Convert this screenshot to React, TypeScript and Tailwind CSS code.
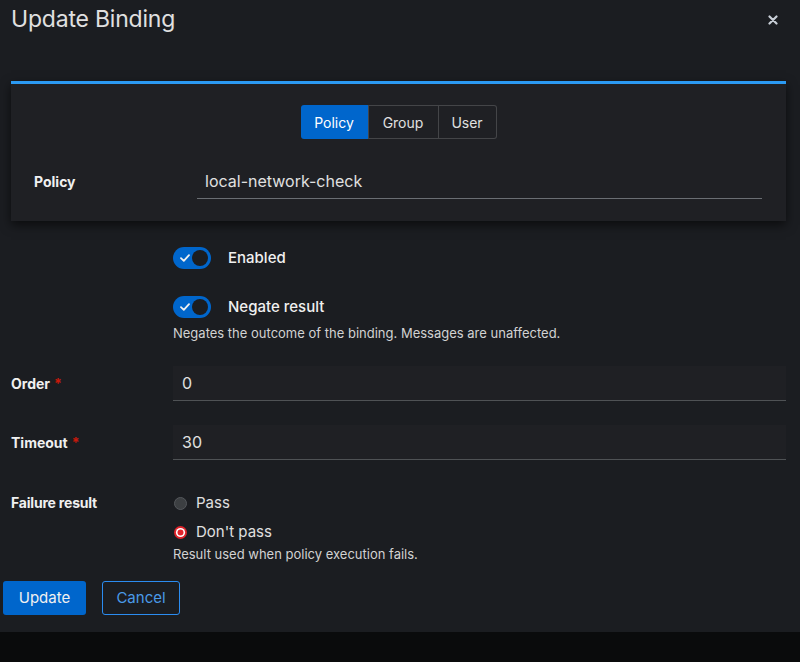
import React from "react";

function Toggle() {
  return (
    <div className="relative w-[38px] h-[22px] rounded-full bg-[#0066cc] shrink-0">
      <svg className="absolute left-[7px] top-[7px]" width="10" height="8" viewBox="0 0 10 8">
        <path d="M1 4.2 L3.8 6.8 L9 1.2" stroke="#f0f0f0" strokeWidth="1.8" fill="none" strokeLinecap="round" strokeLinejoin="round" />
      </svg>
      <div className="absolute right-[3px] top-[3px] w-[16px] h-[16px] rounded-full bg-[#1b1d21]" />
    </div>
  );
}

function Field({ label, value, required, topClass }: { label: string; value: string; required?: boolean; topClass: string }) {
  return (
    <div className={`flex items-center ${topClass}`}>
      <div className="w-[162px] shrink-0 text-[14px] font-bold text-[#f0f0f0]">
        {label}
        {required && <span className="text-[#c9190b] ml-[4px]">*</span>}
      </div>
      <div className="flex-1 h-[35px] bg-[#1f2024] border-b border-[#4f5255] flex items-center pl-[9px] text-[16px] text-[#e0e0e0]">
        {value}
      </div>
    </div>
  );
}

export default function App() {
  return (
    <div
      className="w-[800px] h-[662px] bg-[#0a0b0c] flex flex-col overflow-hidden"
      style={{ fontFamily: "Inter, 'Noto Sans', sans-serif" }}
    >
      <div className="h-[632px] bg-[#1b1d21] flex flex-col">
        {/* Header */}
        <div className="flex items-start justify-between pl-[11px] pr-[22px] pt-[5px]">
          <div className="text-[23px] leading-[28px] text-[#e0e0e0] tracking-[-0.2px]">Update Binding</div>
          <svg className="mt-[10px]" width="10" height="10" viewBox="0 0 10 10">
            <path d="M1.5 1.5 L8.5 8.5 M8.5 1.5 L1.5 8.5" stroke="#c8ced6" strokeWidth="2.2" strokeLinecap="round" />
          </svg>
        </div>

        {/* Card */}
        <div className="ml-[11px] mr-[14px] mt-[48px] border-t-[3px] border-[#2b9af3] bg-[#1f2024] shadow-[0_4px_10px_rgba(0,0,0,0.6)] pb-[22px]">
          <div className="flex justify-center mt-[21px]">
            <div className="flex h-[34px] text-[14px]">
              <div className="w-[67px] flex items-center justify-center bg-[#0066cc] text-white rounded-l-[3px]">Policy</div>
              <div className="w-[71px] flex items-center justify-center border border-[#444548] text-[#e0e0e0]">Group</div>
              <div className="w-[58px] flex items-center justify-center border border-l-0 border-[#444548] text-[#e0e0e0] rounded-r-[3px]">User</div>
            </div>
          </div>
          <div className="flex items-center mt-[25px] pr-[24px]">
            <div className="w-[186px] pl-[23px] shrink-0 text-[14px] font-bold text-[#f0f0f0]">Policy</div>
            <div className="flex-1 h-[35px] border-b border-[#6a6e73] flex items-center pl-[8px] text-[16px] text-[#e0e0e0]">
              local-network-check
            </div>
          </div>
        </div>

        {/* Form */}
        <div className="pl-[11px] pr-[14px]">
          <div className="pl-[162px] mt-[26px] flex items-center gap-[17px]">
            <Toggle />
            <span className="text-[15px] text-[#f0f0f0] font-medium">Enabled</span>
          </div>
          <div className="pl-[162px] mt-[26px] flex items-center gap-[17px]">
            <Toggle />
            <span className="text-[15px] text-[#f0f0f0] font-medium">Negate result</span>
          </div>
          <div className="pl-[162px] mt-[5px] text-[13px] leading-[20px] text-[#d2d2d2]">
            Negates the outcome of the binding. Messages are unaffected.
          </div>

          <Field label="Order" value="0" required topClass="mt-[23px]" />
          <Field label="Timeout" value="30" required topClass="mt-[24px]" />

          <div className="flex mt-[33px]">
            <div className="w-[162px] shrink-0 text-[14px] font-bold text-[#f0f0f0] leading-[20px] tracking-[-0.2px]">Failure result</div>
            <div className="flex flex-col">
              <div className="flex items-center gap-[9px] h-[20px]">
                <svg width="13" height="13" viewBox="0 0 13 13" className="ml-[1px]">
                  <circle cx="6.5" cy="6.5" r="6" fill="#3c3f42" stroke="#55585c" strokeWidth="1" />
                </svg>
                <span className="text-[15px] text-[#e0e0e0]">Pass</span>
              </div>
              <div className="flex items-center gap-[9px] h-[20px] mt-[9px]">
                <svg width="13" height="13" viewBox="0 0 13 13" className="ml-[1px]">
                  <circle cx="6.5" cy="6.5" r="6.5" fill="#e0242b" />
                  <circle cx="6.5" cy="6.5" r="4.6" fill="#ffffff" />
                  <circle cx="6.5" cy="6.5" r="3" fill="#e0242b" />
                </svg>
                <span className="text-[15px] text-[#e0e0e0]">Don't pass</span>
              </div>
              <div className="text-[13px] leading-[20px] text-[#d2d2d2] mt-[2px]">Result used when policy execution fails.</div>
            </div>
          </div>
        </div>

        <div className="flex gap-[16px] pl-[3px] mt-[17px]">
          <div className="w-[83px] h-[34px] rounded-[3px] bg-[#0066cc] text-[#f0f0f0] text-[15px] flex items-center justify-center">Update</div>
          <div className="w-[78px] h-[34px] rounded-[3px] border border-[#2b8cf0] text-[#4a9ae8] text-[15px] flex items-center justify-center">Cancel</div>
        </div>
      </div>
    </div>
  );
}
